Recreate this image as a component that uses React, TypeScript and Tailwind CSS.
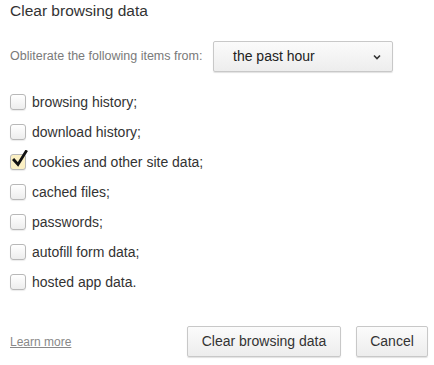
const items = [
  { label: 'browsing history;', checked: false },
  { label: 'download history;', checked: false },
  { label: 'cookies and other site data;', checked: true },
  { label: 'cached files;', checked: false },
  { label: 'passwords;', checked: false },
  { label: 'autofill form data;', checked: false },
  { label: 'hosted app data.', checked: false },
];

function Checkbox({ checked }: { checked: boolean }) {
  return (
    <div
      className={
        'relative w-[16px] h-[16px] rounded-[3px] border border-[#b8b8b8] shadow-[0_1px_1px_rgba(0,0,0,0.08)] ' +
        (checked ? 'bg-[#fbf0c4]' : 'bg-gradient-to-b from-[#ffffff] to-[#ededed]')
      }
    >
      {checked && (
        <svg className="absolute left-[1px] top-[-5px]" width="16" height="18" viewBox="0 0 16 18">
          <path d="M2 10 L6 14.5 L14 1.5" fill="none" stroke="#111" strokeWidth="2.8" strokeLinecap="square" strokeLinejoin="miter" />
        </svg>
      )}
    </div>
  );
}

export default function App() {
  return (
    <div className="w-[434px] h-[365px] bg-white pl-[10px] pr-[6px] font-['Liberation_Sans',Arial,sans-serif] text-[#333]">
      <h1 className="pt-[1px] text-[15.5px] leading-[20px] text-[#333]">Clear browsing data</h1>

      <div className="mt-[20px] flex items-center h-[31px]">
        <span className="text-[12.5px] text-[#7a7a7a] w-[203px]">Obliterate the following items from:</span>
        <div className="flex items-center justify-between w-[180px] h-[31px] pl-[19px] pr-[11px] rounded-[2px] border border-[#c8c8c8] bg-gradient-to-b from-[#fbfbfb] to-[#ededed] shadow-[0_1px_1px_rgba(0,0,0,0.12)]">
          <span className="text-[14px] text-[#222]">the past hour</span>
          <svg width="8" height="6" viewBox="0 0 8 6">
            <path d="M1 1.5 L4 4.5 L7 1.5" fill="none" stroke="#333" strokeWidth="1.6" />
          </svg>
        </div>
      </div>

      <div className="mt-[15px] flex flex-col">
        {items.map((it) => (
          <div key={it.label} className="flex items-center h-[30px] gap-[6px]">
            <Checkbox checked={it.checked} />
            <span className="text-[14px] text-[#333]">{it.label}</span>
          </div>
        ))}
      </div>

      <div className="mt-[29px] flex items-center">
        <a className="text-[12px] text-[#888] underline">Learn more</a>
        <div className="ml-auto flex gap-[15px]">
          <button className="h-[31px] w-[154px] rounded-[2px] border border-[#c8c8c8] bg-gradient-to-b from-[#fbfbfb] to-[#ededed] shadow-[0_1px_1px_rgba(0,0,0,0.12)] text-[14px] text-[#333]">
            Clear browsing data
          </button>
          <button className="h-[31px] w-[72px] rounded-[2px] border border-[#c8c8c8] bg-gradient-to-b from-[#fbfbfb] to-[#ededed] shadow-[0_1px_1px_rgba(0,0,0,0.12)] text-[14px] text-[#333]">
            Cancel
          </button>
        </div>
      </div>
    </div>
  );
}
